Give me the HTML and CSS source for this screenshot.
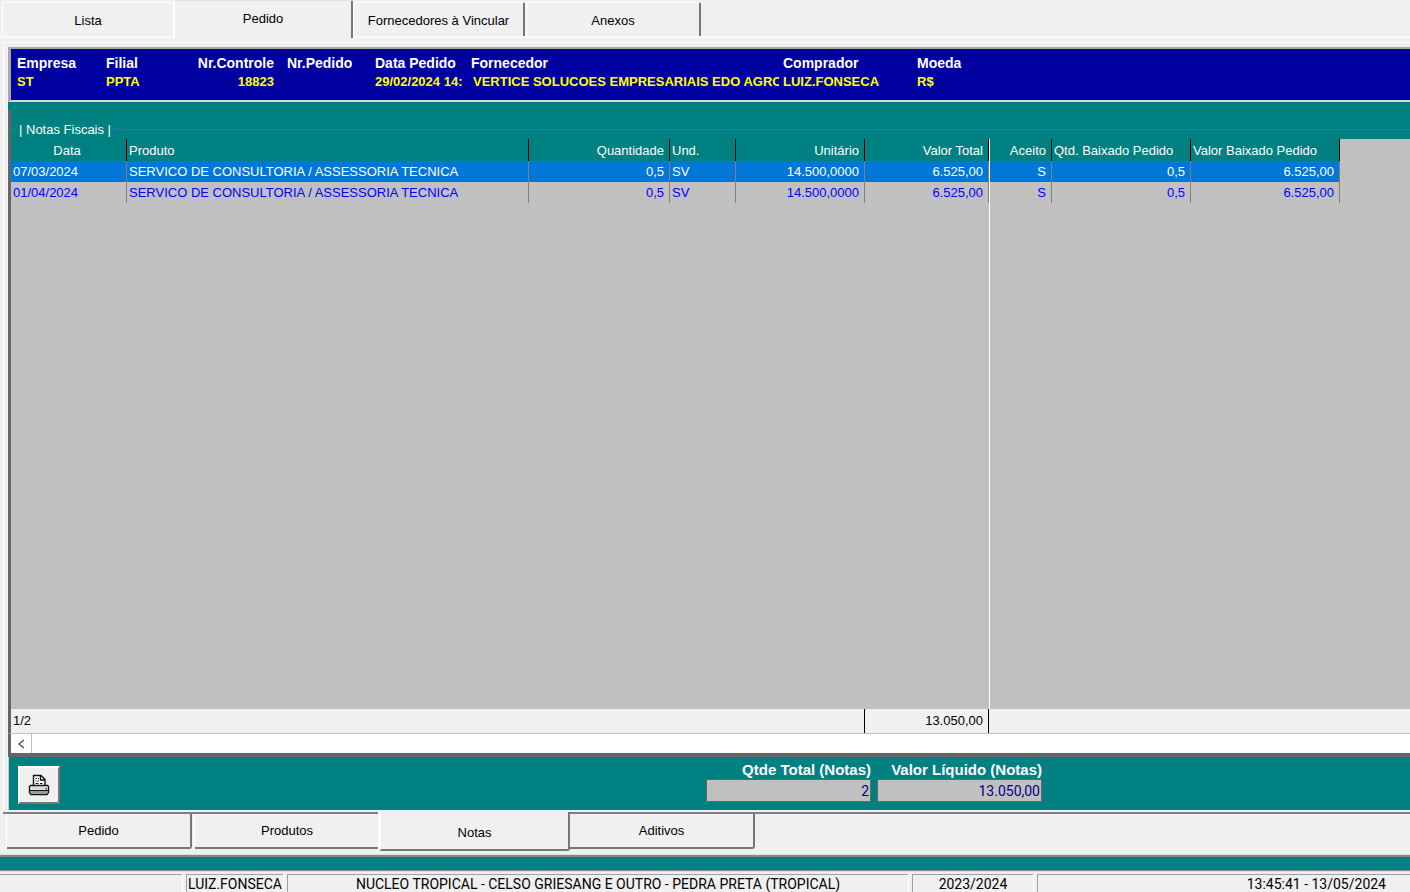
FILE: index.html
```html
<!DOCTYPE html>
<html lang="pt-BR">
<head>
<meta charset="utf-8">
<meta name="viewport" content="width=device-width, initial-scale=1">
<title>Pedido - Notas Fiscais</title>
<link rel="stylesheet" href="styles.css">
</head>
<body>
<div class="app">
  <nav class="tabs">
    <button type="button" class="tab tab-lista">Lista</button>
    <button type="button" class="tab tab-active">Pedido</button>
    <button type="button" class="tab tab-fornecedores">Fornecedores à Vincular</button>
    <button type="button" class="tab tab-anexos">Anexos</button>
  </nav>

  <main class="page">
    <dl class="order">
      <div class="field"><dt>Empresa</dt><dd>ST</dd></div>
      <div class="field"><dt>Filial</dt><dd>PPTA</dd></div>
      <div class="field field-right"><dt>Nr.Controle</dt><dd>18823</dd></div>
      <div class="field"><dt>Nr.Pedido</dt><dd></dd></div>
      <div class="field"><dt>Data Pedido</dt><dd>29/02/2024 14:</dd></div>
      <div class="field field-supplier"><dt>Fornecedor</dt><dd>VERTICE SOLUCOES EMPRESARIAIS EDO AGRO</dd></div>
      <div class="field"><dt>Comprador</dt><dd>LUIZ.FONSECA</dd></div>
      <div class="field"><dt>Moeda</dt><dd>R$</dd></div>
    </dl>

    <section class="notes">
      <h2 class="notes-title"><span>| Notas Fiscais |</span></h2>
      <div class="grid-area">
        <table class="grid">
          <colgroup>
            <col class="c-data"><col class="c-produto"><col class="c-qtd"><col class="c-und"><col class="c-unit"><col class="c-total"><col class="c-aceito"><col class="c-qbx"><col class="c-vbx"><col>
          </colgroup>
          <thead>
            <tr><th class="mid">Data</th><th>Produto</th><th class="num">Quantidade</th><th>Und.</th><th class="num">Unitário</th><th class="num">Valor Total</th><th class="num split">Aceito</th><th>Qtd. Baixado Pedido</th><th>Valor Baixado Pedido</th><td class="rest"></td></tr>
          </thead>
          <tbody>
            <tr class="selected"><td>07/03/2024</td><td>SERVICO DE CONSULTORIA / ASSESSORIA TECNICA</td><td class="num">0,5</td><td>SV</td><td class="num">14.500,0000</td><td class="num">6.525,00</td><td class="num split">S</td><td class="num">0,5</td><td class="num">6.525,00</td><td class="rest"></td></tr>
            <tr><td>01/04/2024</td><td>SERVICO DE CONSULTORIA / ASSESSORIA TECNICA</td><td class="num">0,5</td><td>SV</td><td class="num">14.500,0000</td><td class="num">6.525,00</td><td class="num split">S</td><td class="num">0,5</td><td class="num">6.525,00</td><td class="rest"></td></tr>
            <tr class="blank"><td colspan="6"></td><td class="split" colspan="4"></td></tr>
          </tbody>
          <tfoot>
            <tr><td>1/2</td><td class="line" colspan="4"></td><td class="num line">13.050,00</td><td colspan="4"></td></tr>
          </tfoot>
        </table>
      </div>
      <div class="scroll">
        <button type="button" class="scroll-btn" aria-label="Rolar para a esquerda">
          <svg width="8" height="10" viewBox="0 0 8 10"><path d="M7 1 2 5l5 4" fill="none" stroke="#555" stroke-width="1.400"/></svg>
        </button>
      </div>
    </section>

    <section class="totals">
      <button type="button" class="print" aria-label="Imprimir">
        <svg width="22" height="22" viewBox="0 0 22 22">
          <path d="M5.500 12V1.500h7.500l4 4V12z" fill="#fff" stroke="#111" stroke-width="1.400"/>
          <path d="M12.500 1.500V6H17" fill="none" stroke="#111" stroke-width="1.300"/>
          <path d="M7.500 4.500h1.500M10 4.500h1M7.500 7h1M9.500 7h1.500M7.500 9.500h3M12 9.500h2.500" fill="none" stroke="#111" stroke-width="1.200"/>
          <path d="M2.500 11.500h17l1 1v6l-1.500 2H3l-1.500-2v-6z" fill="#eee" stroke="#111" stroke-width="1.400"/>
          <path d="M2.200 17h17.600v1.500l-1 1.300H3.200l-1-1.300z" fill="#999"/>
          <path d="M2 16.500h18" stroke="#111"/>
          <path d="M3.500 13.300h14M4.500 14.800h11" fill="none" stroke="#aaa" stroke-dasharray="1 1"/>
          <path d="M17 14h2v1.500h-2z" fill="#f22"/>
        </svg>
      </button>
      <div class="sum">
        <label for="qtde">Qtde Total (Notas)</label>
        <input id="qtde" type="text" value="2" readonly>
      </div>
      <div class="sum">
        <label for="liquido">Valor Líquido (Notas)</label>
        <input id="liquido" type="text" value="13.050,00" readonly>
      </div>
    </section>
  </main>

  <nav class="subtabs">
    <button type="button" class="subtab">Pedido</button>
    <button type="button" class="subtab subtab-open">Produtos</button>
    <button type="button" class="subtab subtab-active">Notas</button>
    <button type="button" class="subtab">Aditivos</button>
  </nav>

  <div class="strip"></div>

  <footer class="status">
    <div class="cell cell-blank"></div>
    <div class="cell cell-user">LUIZ.FONSECA</div>
    <div class="cell cell-unit">NUCLEO TROPICAL - CELSO GRIESANG E OUTRO - PEDRA PRETA (TROPICAL)</div>
    <div class="cell cell-season">2023/2024</div>
    <div class="cell cell-clock">13:45:41 - 13/05/2024</div>
  </footer>
</div>
</body>
</html>
```

FILE: styles.css
```css
* { box-sizing: border-box; }

body {
  margin: 0;
  background: #f0f0f0;
  color: #000;
  font: 13px/20px "Liberation Sans", Arial, sans-serif;
}

button, input { font: inherit; color: inherit; }

.app {
  display: flex;
  flex-direction: column;
  height: 100vh;
  overflow: hidden;
}

/* Upper tabs */
.tabs {
  display: flex;
  align-items: flex-end;
  height: 38px;
  padding-left: 2px;
  border-bottom: 2px solid #fafafa;
  flex: none;
}

.tab {
  height: 34px;
  padding: 2px 0 0;
  background: #f0f0f0;
  border: 0 solid #fff;
  border-width: 1px 0 0 1px;
  border-radius: 2px 2px 0 0;
}

.tab-lista { width: 172px; border-right-width: 1px; }

.tab-active {
  width: 179px;
  height: 38px;
  margin-bottom: -2px;
  padding: 0 0 1px;
  border-top-color: #e3e3e3;
  border-right: 2px solid #777;
}

.tab-fornecedores { width: 172px; border-right: 2px solid #777; }
.tab-anexos { width: 175px; margin-left: 1px; border-right: 2px solid #777; }

/* Page frame */
.page {
  display: flex;
  flex-direction: column;
  flex: 1;
  min-height: 0;
  margin: 4px 0 0 3px;
  padding: 4px 0 0 4px;
  border: solid #fff;
  border-width: 1px 0 0 1px;
}

.order {
  display: grid;
  grid-template-columns: 89px 80px 101px 88px 96px 312px 134px 1fr;
  flex: none;
  height: 55px;
  margin: 0;
  padding: 5px 0 0 6px;
  background: #0000a0;
  border: solid #a8a8a8;
  border-width: 2px 0 2px 3px;
  border-bottom-color: #d8d8d8;
  font-weight: bold;
}

.field { min-width: 0; white-space: nowrap; }
.field dt { color: #fff; font-size: 14px; line-height: 19px; }
.field dd { margin: 0; color: #ff0; line-height: 18px; }
.field-right { justify-self: end; padding-right: 13px; text-align: right; }
.field-supplier { padding-right: 4px; }
.field-supplier dd { padding-left: 2px; overflow: hidden; }

/* Invoice list */
.notes {
  display: flex;
  flex-direction: column;
  flex: 1;
  min-height: 0;
  padding-top: 7px;
  background: #008080;
}

.notes-title {
  display: flex;
  align-items: center;
  flex: none;
  height: 30px;
  margin: 0;
  padding: 10px 0 0 0;
  border: solid #666;
  border-width: 1px 0 0 3px;
  border-top-color: #406a6a;
  color: #fff;
  font-size: 13px;
  font-weight: normal;
}

.notes-title::before, .notes-title::after {
  content: "";
  width: 8px;
  height: 1px;
  background: #8a5656;
}

.notes-title::after { flex: 1; margin-left: 3px; }

.grid-area {
  flex: 1;
  min-height: 0;
  border-left: 3px solid #666;
  background: #c0c0c0;
}

.grid {
  width: 100%;
  height: 100%;
  table-layout: fixed;
  border-collapse: separate;
  border-spacing: 0;
  white-space: nowrap;
}

.c-data { width: 116px; }
.c-produto { width: 402px; }
.c-qtd { width: 141px; }
.c-und { width: 66px; }
.c-unit { width: 129px; }
.c-total { width: 124px; }
.c-aceito { width: 63px; }
.c-qbx { width: 139px; }
.c-vbx { width: 149px; }

.grid th, .grid td { padding: 0 5px 0 2px; text-align: left; }

.grid th {
  height: 22px;
  padding-top: 2px;
  background: #008080;
  border-right: 1px solid #000;
  color: #fff;
  font-weight: normal;
}

.grid tbody td { height: 21px; padding-top: 1px; border-right: 1px solid #808080; color: #00f; }
.grid .selected td:not(.rest) { background: #0078d7; background-clip: padding-box; color: #fff; }
.grid .num { text-align: right; }
.grid .mid { text-align: center; }
.grid .split { border-left: 1px solid #fff; }
.grid tbody .rest, .grid .rest { border: 0; background: #c0c0c0; }
.grid tbody .blank td { height: auto; border-right: 0; }

.grid tfoot td {
  height: 24px;
  background: #f0f0f0;
}

.grid tfoot .line { border-right: 1px solid #000; }

.scroll {
  flex: none;
  height: 24px;
  background: #fff;
  border: solid #666;
  border-width: 1px 0 4px 3px;
  border-top-color: #c0c0c0;
}

.scroll-btn {
  display: grid;
  place-items: center;
  width: 21px;
  height: 19px;
  padding: 0;
  background: #fff;
  border: 0;
  border-right: 1px solid #c0c0c0;
}

/* Totals */
.totals {
  display: flex;
  align-items: flex-start;
  gap: 6px;
  flex: none;
  height: 53px;
  padding: 4px 0 0 9px;
  background: #008080;
  border-left: 1px solid #ccc;
}

.print {
  display: grid;
  place-items: center;
  width: 42px;
  height: 38px;
  margin: 5px 640px 0 0;
  padding: 0;
  background: #f0f0f0;
  border: 2px solid;
  border-color: #fff #777 #777 #fff;
}

.sum { display: flex; flex-direction: column; align-items: flex-end; width: 165px; }

.sum label {
  color: #fff;
  font-size: 15px;
  font-weight: bold;
  line-height: 18px;
  white-space: nowrap;
}

.sum input {
  width: 100%;
  height: 23px;
  padding: 0 1px;
  background: #c0c0c0;
  border: 1px solid #666;
  color: #000080;
  font: 14px/20px Roboto, "Liberation Sans", sans-serif;
  text-align: right;
}

/* Lower tabs */
.subtabs {
  display: flex;
  align-items: flex-start;
  flex: none;
  height: 43px;
  margin: 2px 0 0 3px;
  padding-left: 4px;
  border-top: 2px solid #808080;
  box-shadow: 0 -2px #e8f2f2;
}

.subtab {
  width: 185px;
  height: 35px;
  padding: 0;
  background: #f0f0f0;
  border: solid #777;
  border-width: 0 2px 2px 0;
  border-radius: 0 0 3px 0;
  box-shadow: -1px 0 #fff;
}

.subtab-open { margin-left: 3px; width: 184px; border-right-width: 0; border-radius: 0; }

.subtab-active {
  width: 191px;
  height: 39px;
  margin-top: -2px;
  padding: 4px 0 0;
  border-left: 2px solid #fff;
}

.subtab-active + .subtab { box-shadow: none; }

.strip {
  flex: none;
  height: 16px;
  background: #008080;
  border: solid #888;
  border-width: 2px 0 1px;
  outline: 1px solid #ddd;
}

/* Status bar */
.status {
  display: flex;
  flex: none;
  gap: 4px;
  height: 21px;
  padding-top: 3px;
  font: 14px/18px Roboto, "Liberation Sans", sans-serif;
  text-align: center;
  white-space: nowrap;
}

.cell {
  flex: none;
  overflow: hidden;
  border: solid #a0a0a0;
  border-width: 1px 0 0 1px;
  box-shadow: 1px 0 #fff;
}

.cell-blank { width: 182px; border-left: 0; }
.cell-user { width: 97px; }
.cell-unit { width: 621px; }
.cell-season { width: 121px; }
.cell-clock { flex: 1; padding-right: 24px; text-align: right; }
```
